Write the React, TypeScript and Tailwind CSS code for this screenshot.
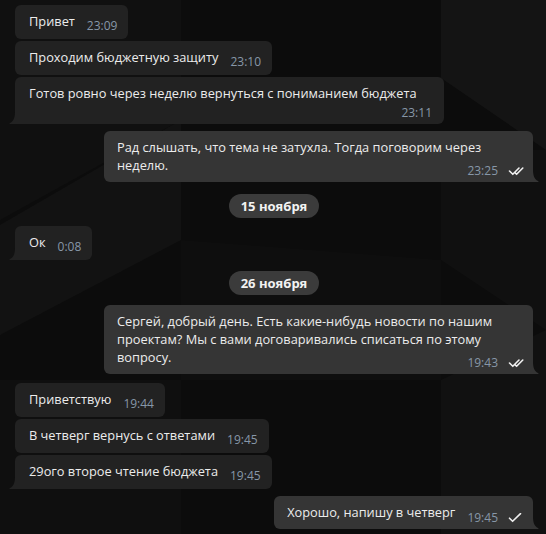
import clsx from 'clsx';

type Msg =
  | { kind: 'date'; text: string; mt: string }
  | {
      kind: 'in' | 'out';
      lines: string[];
      time: string;
      mt: string;
      tail?: boolean;
      wide?: boolean;
      timeBelow?: boolean;
      read?: boolean;
    };

const messages: Msg[] = [
  { kind: 'in', lines: ['Привет'], time: '23:09', mt: 'mt-[5px]' },
  { kind: 'in', lines: ['Проходим бюджетную защиту'], time: '23:10', mt: 'mt-[2px]' },
  {
    kind: 'in',
    lines: ['Готов ровно через неделю вернуться с пониманием бюджета'],
    time: '23:11',
    mt: 'mt-[2px]',
    tail: true,
    wide: true,
    timeBelow: true,
  },
  {
    kind: 'out',
    lines: ['Рад слышать, что тема не затухла. Тогда поговорим через', 'неделю.'],
    time: '23:25',
    mt: 'mt-[7px]',
    tail: true,
    wide: true,
    read: true,
  },
  { kind: 'date', text: '15 ноября', mt: 'mt-[12px]' },
  { kind: 'in', lines: ['Ок'], time: '0:08', mt: 'mt-[8px]', tail: true },
  { kind: 'date', text: '26 ноября', mt: 'mt-[11px]' },
  {
    kind: 'out',
    lines: [
      'Сергей, добрый день. Есть какие-нибудь новости по нашим',
      'проектам? Мы с вами договаривались списаться по этому',
      'вопросу.',
    ],
    time: '19:43',
    mt: 'mt-[10px]',
    tail: true,
    wide: true,
    read: true,
  },
  { kind: 'in', lines: ['Приветствую'], time: '19:44', mt: 'mt-[9px]' },
  { kind: 'in', lines: ['В четверг вернусь с ответами'], time: '19:45', mt: 'mt-[2px]' },
  { kind: 'in', lines: ['29ого второе чтение бюджета'], time: '19:45', mt: 'mt-[2px]', tail: true },
  { kind: 'out', lines: ['Хорошо, напишу в четверг'], time: '19:45', mt: 'mt-[7px]', tail: true },
];

function Tail({ out }: { out: boolean }) {
  return (
    <svg
      width="6"
      height="12"
      viewBox="0 0 6 12"
      className={clsx('absolute bottom-0', out ? 'right-[-6px] -scale-x-100' : 'left-[-6px]')}
    >
      <path
        d="M6 0 C6 6 4.2 9.6 0.9 11.1 C0.2 11.4 0.3 12 1 12 L6 12 Z"
        fill={out ? '#353535' : '#222222'}
      />
    </svg>
  );
}

function Checks({ read }: { read?: boolean }) {
  return (
    <svg width="18" height="10" viewBox="0 0 18 10" fill="none" stroke="#f0f0f0" strokeWidth="1.6">
      {read ? (
        <path d="M1.5 5 L4.8 8.3 L11 2 M7.2 6.9 L8.6 8.3 L14.8 2" strokeLinecap="round" strokeLinejoin="round" />
      ) : (
        <path d="M1.5 5.2 L4.6 8.3 L12.5 0.6" strokeLinecap="round" strokeLinejoin="round" />
      )}
    </svg>
  );
}

// time + ticks, used both as the visible stamp and as an invisible spacer
function Stamp({ m, out }: { m: Extract<Msg, { kind: 'in' | 'out' }>; out: boolean }) {
  return (
    <>
      <span>{m.time}</span>
      {out && <Checks read={m.read} />}
    </>
  );
}

function Bubble({ m }: { m: Extract<Msg, { kind: 'in' | 'out' }> }) {
  const out = m.kind === 'out';
  return (
    <div
      className={clsx(
        'relative rounded-[6px] pt-[7px]',
        m.mt,
        out ? 'self-end bg-[#353535] pl-[13px] pr-[7px] pb-[8px]' : 'self-start bg-[#222222] pl-[14px] pr-[11px] pb-[9px]',
        m.wide && 'w-[429px]',
        m.tail && (out ? 'rounded-br-none' : 'rounded-bl-none'),
      )}
    >
      {m.tail && <Tail out={out} />}
      <p className="text-[12.8px] leading-[18px] text-[#ececec] whitespace-nowrap">
        {m.lines.map((l, i) => (
          <span key={i}>
            {l}
            {i < m.lines.length - 1 && <br />}
          </span>
        ))}
        {!m.timeBelow && (
          <span className="invisible inline-flex items-center gap-[10px] pl-[12px] text-[12px] leading-[14px]">
            <Stamp m={m} out={out} />
          </span>
        )}
      </p>
      {m.timeBelow && <div className="h-[13px]" />}
      <div
        className={clsx(
          'absolute flex items-center gap-[10px] text-[12px] leading-[14px] text-[#8797a8]',
          out ? 'right-[7px] bottom-[4px]' : m.timeBelow ? 'right-[12px] bottom-[4px]' : 'right-[11px] bottom-[6px]',
        )}
      >
        <Stamp m={m} out={out} />
      </div>
    </div>
  );
}

function DatePill({ text, mt }: { text: string; mt: string }) {
  return (
    <div className={clsx('self-center rounded-full bg-[#3b3b3b] px-[12px] h-[24px] flex items-center', mt)}>
      <span className="text-[13px] font-bold text-[#f2f2f2] leading-none">{text}</span>
    </div>
  );
}

export default function App() {
  return (
    <div className="relative w-[546px] h-[534px] overflow-hidden bg-[#0c0c0c] font-['Open_Sans',sans-serif]">
      {/* faint geometric wallpaper */}
      <svg className="absolute inset-0" width="546" height="534" viewBox="0 0 546 534">
        <polygon points="441,0 546,0 546,150 441,78" fill="#ffffff" opacity="0.035" />
        <polygon points="0,0 181,0 181,120 0,220" fill="#ffffff" opacity="0.018" />
        <polygon points="0,225 181,120 181,240 0,335" fill="#ffffff" opacity="0.028" />
        <polygon points="441,150 546,150 546,330 441,260" fill="#ffffff" opacity="0.02" />
        <polygon points="181,240 441,260 441,380 181,380" fill="#ffffff" opacity="0.012" />
        <polygon points="0,380 181,380 181,534 0,534" fill="#ffffff" opacity="0.015" />
        <polygon points="441,380 546,330 546,534 441,534" fill="#ffffff" opacity="0.025" />
      </svg>
      <div className="relative flex flex-col pl-[15px] pr-[13px]">
        {messages.map((m, i) =>
          m.kind === 'date' ? <DatePill key={i} text={m.text} mt={m.mt} /> : <Bubble key={i} m={m} />,
        )}
      </div>
    </div>
  );
}
